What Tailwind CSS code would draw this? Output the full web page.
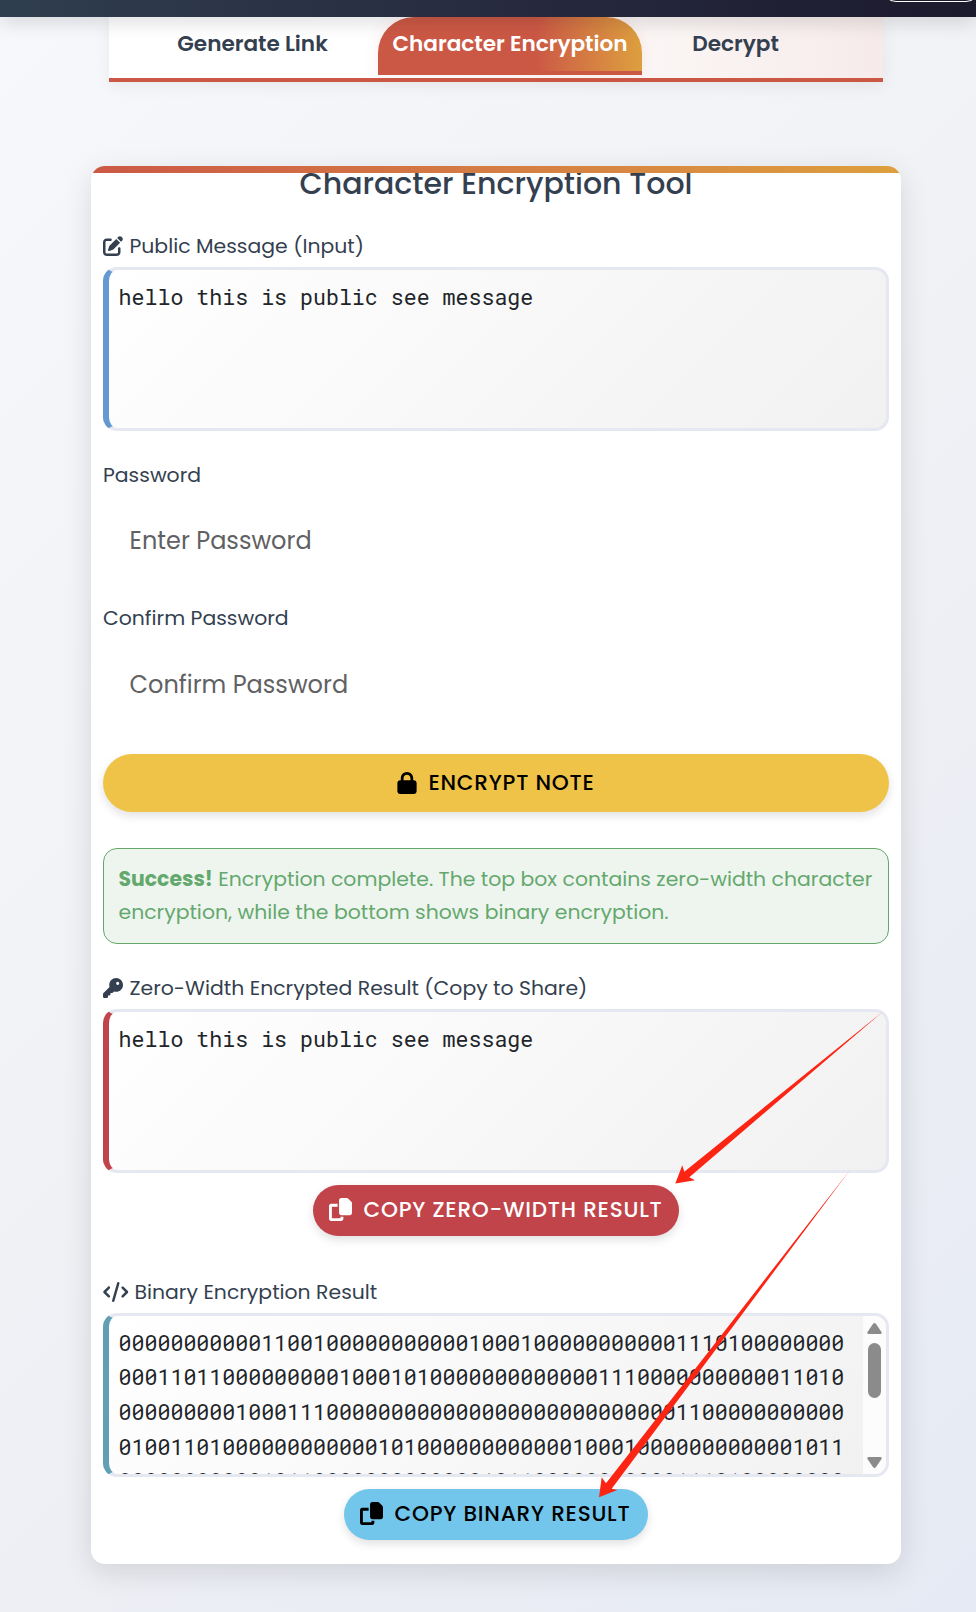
<!DOCTYPE html>
<html lang="en">
<head>
<meta charset="utf-8">
<title>Character Encryption Tool</title>
<script src="https://cdn.jsdelivr.net/npm/@tailwindcss/browser@4"></script>
</head>
<body class="relative h-[1612px] overflow-hidden bg-linear-135 from-[#f7f8fb] via-[#f0f1f5] to-[#e6eaf4] font-['Poppins','Inter',sans-serif] text-[#343f50]">
<header class="relative z-10 h-[17px] overflow-hidden bg-linear-to-r from-[#2f3e4e] via-[#272b40] to-[#1c1a2d] shadow-[0_4px_20px_rgba(0,0,0,0.16)]">
  <div class="-mt-[38px] ml-[882px] h-10 w-[98px] rounded-[14px] border border-white"></div>
</header>

<nav class="ml-[109px] flex h-[65px] w-[774px] items-start border-b-4 border-[#cb5845] bg-linear-to-r from-white via-white via-45% to-[#f6ebea] pl-[18px] text-[21.6px] font-semibold shadow-[0_4px_15px_rgba(0,0,0,0.06)]">
  <a class="flex h-[55px] w-[251px] items-center justify-center">Generate Link</a>
  <a class="flex h-[58px] w-[264px] items-center justify-center rounded-t-[36px] border-b-4 border-[#cb5845] bg-linear-to-r from-[#cb5845] via-[#cb5845] via-60% to-[#dd9f3d] pt-px text-white shadow-[0_0_15px_rgba(203,88,69,0.1)]">Character Encryption</a>
  <a class="flex h-[55px] w-[187px] items-center justify-center">Decrypt</a>
</nav>

<main class="relative mt-[84px] ml-[91px] flex h-[1398px] w-[810px] flex-col overflow-hidden rounded-[14px] bg-white px-3 shadow-[0_8px_30px_rgba(0,0,0,0.12)]">
  <h1 class="flex h-[35px] items-center justify-center text-[30px] font-medium">Character Encryption Tool</h1>
  <div class="absolute inset-x-0 top-0 h-[7px] bg-linear-to-r from-[#cb5845] to-[#dd9f3d]"></div>

  <label class="mt-[30px] flex h-[30px] items-center gap-[6.5px] text-[20.4px]">
    <svg class="size-5" viewBox="0 0 512 512" fill="currentColor"><path d="M471.6 21.7c-21.9-21.9-57.3-21.9-79.2 0L362.3 51.7l97.9 97.9 30.1-30.1c21.9-21.9 21.9-57.3 0-79.2L471.6 21.7zm-299.2 220c-6.1 6.1-10.8 13.6-13.5 21.9l-29.6 88.8c-2.9 8.6-.6 18.1 5.8 24.6s15.9 8.7 24.6 5.8l88.8-29.6c8.2-2.7 15.7-7.4 21.9-13.5L437.7 172.3 339.7 74.3 172.4 241.7zM96 64C43 64 0 107 0 160V416c0 53 43 96 96 96H352c53 0 96-43 96-96V320c0-17.7-14.3-32-32-32s-32 14.3-32 32v96c0 17.7-14.3 32-32 32H96c-17.7 0-32-14.3-32-32V160c0-17.7 14.3-32 32-32h96c17.7 0 32-14.3 32-32s-14.3-32-32-32H96z"/></svg>
    Public Message (Input)
  </label>
  <div class="mt-[6px] h-[164px] shrink-0 rounded-[14px] border-3 border-l-6 border-[#e6e8f1] border-l-[#6499d2] bg-linear-135 from-white to-[#f1f1f1] px-[9.6px] py-[9.6px] font-['Roboto_Mono','DejaVu_Sans_Mono',monospace] text-[21.6px] leading-[34.56px] text-[#212529]">hello this is public see message</div>

  <label class="mt-[29px] flex h-[30px] items-center text-[20.4px]">Password</label>
  <div class="mt-[10px] flex h-[82px] items-center pl-[26.6px] text-[24px] text-[#5f6163]">Enter Password</div>
  <label class="mt-[21px] flex h-[30px] items-center text-[20.4px]">Confirm Password</label>
  <div class="mt-[11px] flex h-[82px] items-center pl-[26.6px] text-[24px] text-[#5f6163]">Confirm Password</div>

  <button class="mt-[28px] flex h-[58px] items-center justify-center gap-[11px] rounded-full bg-[#eec347] text-[21.6px] font-medium tracking-[0.77px] text-black shadow-[0_4px_10px_rgba(0,0,0,0.12)]">
    <svg class="h-[22px] w-5" viewBox="0 0 448 512" fill="currentColor"><path d="M144 144v48H304V144c0-44.2-35.8-80-80-80s-80 35.8-80 80zM80 192V144C80 64.5 144.5 0 224 0s144 64.5 144 144v48h16c35.3 0 64 28.7 64 64V448c0 35.3-28.7 64-64 64H64c-35.3 0-64-28.7-64-64V256c0-35.3 28.7-64 64-64H80z"/></svg>
    ENCRYPT NOTE
  </button>

  <p class="mt-[36px] h-24 shrink-0 rounded-[14px] border border-[#64a76d] bg-[#eef5ef] px-[14.5px] pt-[14px] text-[20.4px] leading-[33px] whitespace-nowrap text-[#64a86d]"><strong class="font-bold">Success!</strong> Encryption complete. The top box contains zero-width character<br>encryption, while the bottom shows binary encryption.</p>

  <label class="mt-[29px] flex h-[30px] items-center gap-[6.5px] text-[20.4px]">
    <svg class="size-5" viewBox="0 0 512 512" fill="currentColor"><path d="M336 352c97.2 0 176-78.8 176-176S433.2 0 336 0S160 78.8 160 176c0 18.7 2.9 36.8 8.3 53.7L7 391c-4.5 4.5-7 10.6-7 17v80c0 13.3 10.7 24 24 24h80c13.3 0 24-10.7 24-24V448h40c13.3 0 24-10.7 24-24V384h40c6.4 0 12.5-2.5 17-7l33.3-33.3c16.9 5.4 35 8.3 53.7 8.3zM376 96a40 40 0 1 1 0 80 40 40 0 1 1 0-80z"/></svg>
    Zero-Width Encrypted Result (Copy to Share)
  </label>
  <div class="mt-[6px] h-[164px] shrink-0 rounded-[14px] border-3 border-l-6 border-[#e6e8f1] border-l-[#c0444c] bg-linear-135 from-white to-[#f1f1f1] px-[9.6px] py-[9.6px] font-['Roboto_Mono','DejaVu_Sans_Mono',monospace] text-[21.6px] leading-[34.56px] text-[#212529]">hello this is public see message</div>
  <button class="mt-[12px] ml-[210px] flex h-[51px] w-[366px] items-center gap-[11.5px] rounded-full bg-[#c0444a] pl-4 text-[21.6px] font-medium tracking-[0.77px] whitespace-nowrap text-white shadow-[0_4px_10px_rgba(0,0,0,0.12)]">
    <svg class="mb-0.5 size-[23px]" viewBox="0 0 512 512" fill="currentColor"><path d="M272 0H396.1c12.7 0 24.9 5.1 33.9 14.1l67.9 67.9c9 9 14.1 21.2 14.1 33.9V336c0 26.5-21.5 48-48 48H272c-26.5 0-48-21.5-48-48V48c0-26.5 21.5-48 48-48zM48 128H192v64H64V448H256V416h64v48c0 26.5-21.5 48-48 48H48c-26.5 0-48-21.5-48-48V176c0-26.5 21.5-48 48-48z"/></svg>
    COPY ZERO-WIDTH RESULT
  </button>

  <label class="mt-[41px] flex h-[30px] items-center gap-[6px] text-[20.4px]">
    <svg class="h-5 w-[25.5px]" viewBox="0 0 640 512" fill="currentColor"><path d="M392.8 1.2c-17-4.9-34.7 5-39.6 22l-128 448c-4.9 17 5 34.7 22 39.6s34.7-5 39.6-22l128-448c4.9-17-5-34.7-22-39.6zm80.6 120.1c-12.5 12.5-12.5 32.8 0 45.3L562.7 256l-89.4 89.4c-12.5 12.5-12.5 32.8 0 45.3s32.8 12.5 45.3 0l112-112c12.5-12.5 12.5-32.8 0-45.3l-112-112c-12.5-12.5-32.8-12.5-45.3 0zm-306.7 0c-12.5-12.5-32.8-12.5-45.3 0l-112 112c-12.5 12.5-12.5 32.8 0 45.3l112 112c12.5 12.5 32.8 12.5 45.3 0s12.5-32.8 0-45.3L77.3 256l89.4-89.4c12.5-12.5 12.5-32.8 0-45.3z"/></svg>
    Binary Encryption Result
  </label>
  <div class="mt-[6px] flex h-[164px] shrink-0 overflow-hidden rounded-[14px] border-3 border-l-6 border-[#e6e8f1] border-l-[#60a0b2] bg-linear-135 from-white to-[#f1f1f1]">
    <div class="flex-1 py-[9.6px] pl-[9.6px] font-['Roboto_Mono','DejaVu_Sans_Mono',monospace] text-[21.6px] leading-[34.7px] whitespace-nowrap text-[#212529]">
      <div>00000000000110010000000000010001000000000001110100000000</div>
      <div>00011011000000000100010100000000000001110000000000011010</div>
      <div>00000000010001110000000000000000000000000001100000000000</div>
      <div>01001101000000000000101000000000000100010000000000001011</div>
      <div>00000000000101100000000000001011000000000001110100000000</div>
    </div>
    <div class="flex w-[23px] flex-col items-center bg-[#fcfcfc] pt-[7px] pb-[6px]">
      <svg class="h-[11px] w-[15px]" viewBox="0 0 15 11" fill="#8b8b8b"><path d="M6.1.8Q7.500-.6 8.900.8L14.500 9Q15.200 11 13.300 11H1.700Q-.2 11 .5 9Z"/></svg>
      <div class="mt-[9px] h-[55px] w-[13px] rounded-full bg-[#8b8b8b]"></div>
      <svg class="mt-auto h-[11px] w-[15px] rotate-180" viewBox="0 0 15 11" fill="#8b8b8b"><path d="M6.1.8Q7.500-.6 8.900.8L14.500 9Q15.200 11 13.300 11H1.700Q-.2 11 .5 9Z"/></svg>
    </div>
  </div>
  <button class="mt-[12px] ml-[241px] flex h-[51px] w-[304px] items-center gap-[11.5px] rounded-full bg-[#72c6ec] pl-4 text-[21.6px] font-medium tracking-[0.77px] whitespace-nowrap text-black shadow-[0_4px_10px_rgba(0,0,0,0.12)]">
    <svg class="mb-0.5 size-[23px]" viewBox="0 0 512 512" fill="currentColor"><path d="M272 0H396.1c12.7 0 24.9 5.1 33.9 14.1l67.9 67.9c9 9 14.1 21.2 14.1 33.9V336c0 26.5-21.5 48-48 48H272c-26.5 0-48-21.5-48-48V48c0-26.5 21.5-48 48-48zM48 128H192v64H64V448H256V416h64v48c0 26.5-21.5 48-48 48H48c-26.5 0-48-21.5-48-48V176c0-26.5 21.5-48 48-48z"/></svg>
    COPY BINARY RESULT
  </button>
</main>

<!-- annotation arrows -->
<svg class="pointer-events-none absolute top-0 left-0 h-[1612px] w-[976px]" viewBox="0 0 976 1612" fill="#fc2413">
  <path d="M675.3 1183.500 682.300 1165.300 684.300 1171.700 883 1011.500 689.300 1177.300 695 1180.300Z"/>
  <path d="M599 1497.200 601.700 1477.300 606 1483.300 850 1170 611.700 1488.700 617.300 1490Z"/>
</svg>
</body>
</html>
